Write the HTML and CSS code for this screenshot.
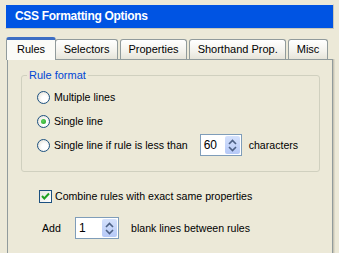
FILE: index.html
```html
<!DOCTYPE html>
<html>
<head>
<title>CSS Formatting Options</title>
<link rel="stylesheet" href="styles.css">
</head>
<body>
  <div class="titlebar">CSS Formatting Options</div>

  <div class="tabs">
    <div class="tab active">Rules</div>
    <div class="tab">Selectors</div>
    <div class="tab">Properties</div>
    <div class="tab">Shorthand Prop.</div>
    <div class="tab">Misc</div>
  </div>

  <div class="panel">
    <fieldset class="group">
      <legend>Rule format</legend>
      <div class="row">
        <span class="radio"></span>
        <span>Multiple lines</span>
      </div>
      <div class="row">
        <span class="radio checked"></span>
        <span>Single line</span>
      </div>
      <div class="row">
        <span class="radio"></span>
        <span>Single line if rule is less than</span>
        <span class="spin spin-wide">
          <span class="spin-value">60</span>
          <span class="spin-btn">
            <svg width="9" height="14" viewBox="0 0 9 14"><path d="M1 6 L4.5 2.5 L8 6" fill="none" stroke="#4d6185" stroke-width="1.6"/><path d="M1 9 L4.5 12.5 L8 9" fill="none" stroke="#4d6185" stroke-width="1.6"/></svg>
          </span>
        </span>
        <span class="after">characters</span>
      </div>
    </fieldset>

    <div class="options">
      <div class="row">
        <span class="check">
          <svg width="11" height="11" viewBox="0 0 11 11"><path d="M2 5 L4.3 7.5 L9 2.5" fill="none" stroke="#21a121" stroke-width="2"/></svg>
        </span>
        <span>Combine rules with exact same properties</span>
      </div>
      <div class="row add-row">
        <span class="add-label">Add</span>
        <span class="spin">
          <span class="spin-value">1</span>
          <span class="spin-btn">
            <svg width="9" height="14" viewBox="0 0 9 14"><path d="M1 6 L4.5 2.5 L8 6" fill="none" stroke="#4d6185" stroke-width="1.6"/><path d="M1 9 L4.5 12.5 L8 9" fill="none" stroke="#4d6185" stroke-width="1.6"/></svg>
          </span>
        </span>
        <span class="after">blank lines between rules</span>
      </div>
    </div>
  </div>
</body>
</html>
```

FILE: styles.css
```css
body {
  margin: 0;
  background-color: #ece9d8;
  font-family: "Liberation Sans", Arial, sans-serif;
  font-size: 10.6px;
  color: #000;
  overflow: hidden;
}

.titlebar {
  margin: 4px 5px 0 5px;
  height: 23px;
  line-height: 23px;
  padding-left: 9px;
  background-color: #0054e3;
  border: 1px solid #c9c6b6;
  border-top-color: #ece9d8;
  border-left-color: #ece9d8;
  color: white;
  font-weight: bold;
  font-size: 12px;
  letter-spacing: -0.3px;
}

.tabs {
  display: flex;
  align-items: flex-end;
  gap: 2px;
  height: 22px;
  margin-top: 8px;
  padding-left: 6px;
  position: relative;
  z-index: 1;
  font-size: 11px;
}

.tab {
  height: 19px;
  line-height: 19px;
  padding: 0 7.5px;
  border: 1px solid #919b9c;
  border-bottom: none;
  border-radius: 3px 3px 0 0;
  background: linear-gradient(#ffffff, #f3f2ec 60%, #e6e4d9);
}

.tab.active {
  height: 20px;
  line-height: 19px;
  padding: 0 10px;
  margin-bottom: -1px;
  margin-right: -3px;
  border-top: 3px solid #3d6ec4;
  background: #fbfbf7;
}

.panel {
  margin: 0 6px 0 7px;
  height: 210px;
  padding: 8px 12px 0 13px;
  border: 1px solid #919b9c;
  background-color: #ece9d8;
  box-shadow: 1px 0 0 #c8c5b5, 2px 0 0 #dcd9c9;
}

.group {
  margin: 0;
  padding: 3px 10px 14px 15px;
  border: 1px solid #d0d0bf;
  border-radius: 3px;
}

.group legend {
  padding: 0 2px;
  margin-left: -10px;
  line-height: 14px;
  font-size: 11px;
  color: #0046d5;
}

.row {
  display: flex;
  align-items: center;
  height: 24px;
}

.radio {
  width: 11px;
  height: 11px;
  border: 1px solid #1c5180;
  border-radius: 50%;
  background: radial-gradient(circle at 60% 60%, #ffffff 30%, #dcd9cc 100%);
  margin-right: 4px;
  display: flex;
  align-items: center;
  justify-content: center;
}

.radio.checked::after {
  content: '';
  width: 5px;
  height: 5px;
  border-radius: 50%;
  background: radial-gradient(circle at 40% 40%, #5fd35f, #21a121);
}

.spin {
  display: flex;
  align-items: center;
  width: 41px;
  height: 20px;
  border: 1px solid #7f9db9;
  background: white;
  margin-left: 12px;
  margin-right: 7px;
}

.spin-wide {
  width: 40px;
}

.spin-value {
  flex: 1;
  padding-left: 3px;
  font-size: 12px;
}

.spin-btn {
  width: 15px;
  height: 18px;
  margin-right: 1px;
  border-radius: 2px;
  background: linear-gradient(#d4e1fc, #b6c9f7);
  display: flex;
  align-items: center;
  justify-content: center;
}

.options {
  padding: 12px 0 0 18px;
}

.check {
  width: 11px;
  height: 11px;
  border: 1px solid #1c5180;
  background: linear-gradient(135deg, #e8e7e0, #ffffff);
  margin-right: 3px;
  display: flex;
  align-items: center;
  justify-content: center;
}

.add-row {
  margin-top: 8px;
  padding-left: 3px;
}

.add-label {
  width: 21px;
}

.add-row .spin {
  margin-left: 12px;
  width: 42px;
  margin-right: 12px;
}
```
